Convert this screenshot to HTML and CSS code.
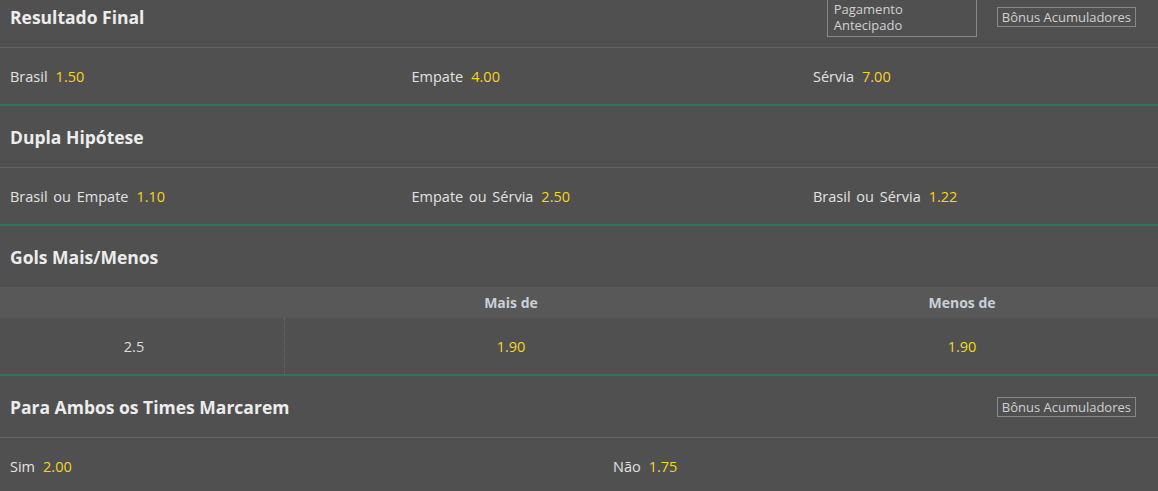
FILE: index.html
```html
<!DOCTYPE html>
<html lang="pt-BR">
<head>
<meta charset="utf-8">
<title>Mercados</title>
<link rel="stylesheet" href="styles.css">
</head>
<body>
<div class="markets">
  <section class="market">
    <div class="market-header">
      <h2 class="title">Resultado Final</h2>
      <div class="actions">
        <span class="tag tag-wide">Pagamento<br>Antecipado</span>
        <span class="tag">Bônus Acumuladores</span>
      </div>
    </div>
    <div class="odds-row three">
      <div class="pick"><span class="label">Brasil</span><span class="price">1.50</span></div>
      <div class="pick"><span class="label">Empate</span><span class="price">4.00</span></div>
      <div class="pick"><span class="label">Sérvia</span><span class="price">7.00</span></div>
    </div>
  </section>

  <section class="market">
    <div class="market-header">
      <h2 class="title">Dupla Hipótese</h2>
    </div>
    <div class="odds-row three">
      <div class="pick"><span class="label">Brasil ou Empate</span><span class="price">1.10</span></div>
      <div class="pick"><span class="label">Empate ou Sérvia</span><span class="price">2.50</span></div>
      <div class="pick"><span class="label">Brasil ou Sérvia</span><span class="price">1.22</span></div>
    </div>
  </section>

  <section class="market">
    <div class="market-header no-border">
      <h2 class="title">Gols Mais/Menos</h2>
    </div>
    <div class="table">
      <div class="thead">
        <div class="cell c0"></div>
        <div class="cell c1">Mais de</div>
        <div class="cell c2">Menos de</div>
      </div>
      <div class="trow">
        <div class="cell c0 line">2.5</div>
        <div class="cell c1 price">1.90</div>
        <div class="cell c2 price">1.90</div>
      </div>
    </div>
  </section>

  <section class="market">
    <div class="market-header">
      <h2 class="title">Para Ambos os Times Marcarem</h2>
      <div class="actions">
        <span class="tag">Bônus Acumuladores</span>
      </div>
    </div>
    <div class="odds-row two">
      <div class="pick"><span class="label">Sim</span><span class="price">2.00</span></div>
      <div class="pick"><span class="label">Não</span><span class="price">1.75</span></div>
    </div>
  </section>
</div>
</body>
</html>
```

FILE: styles.css
```css
* { box-sizing: border-box; }

html, body {
  margin: 0;
  padding: 0;
  background: #505050;
  overflow: hidden;
}

body {
  font-family: "Open Sans", "Noto Sans", sans-serif;
  color: #e4e4e4;
  font-size: 14.5px;
}

.markets {
  margin-top: -14px;
  width: 1158px;
  overflow: hidden;
}

.market {
  border-bottom: 2px solid #2f745c;
}

.market:last-child {
  border-bottom: none;
}

.market-header {
  height: 62px;
  display: flex;
  align-items: center;
  justify-content: space-between;
  padding: 0 22px 0 10px;
  border-bottom: 1px solid #646464;
}

.market-header.no-border {
  border-bottom: none;
  height: 61px;
}

.title {
  margin: 0;
  font-size: 17.5px;
  font-weight: 700;
  color: #ececec;
}

.actions {
  display: flex;
  align-items: center;
  gap: 20px;
}

.tag {
  display: inline-block;
  border: 1px solid #888;
  color: #d0d0d0;
  font-size: 13px;
  line-height: 16px;
  padding: 1px 4px 1px 4px;
  white-space: nowrap;
}

.tag-wide {
  width: 150px;
  padding: 3px 6px 3px 6px;
}

.odds-row {
  height: 56px;
  display: grid;
  align-items: center;
  padding-top: 1px;
}

.odds-row.three { grid-template-columns: repeat(3, 401.5px); }
.odds-row.two { grid-template-columns: repeat(2, 603px); }

.pick {
  padding-left: 10px;
  white-space: nowrap;
}

.label {
  color: #e2e2e2;
  word-spacing: 2px;
  margin-right: 8px;
}

.price {
  color: #f7d51c;
}

.table {
  width: 1206px;
}

.thead, .trow {
  display: grid;
  grid-template-columns: 285px 452px 450px 19px;
}

.thead {
  height: 31px;
  background: #585858;
  align-items: center;
}

.thead .cell {
  font-weight: 700;
  color: #c9d1d8;
  font-size: 14px;
  text-align: center;
}

.trow {
  height: 56px;
}

.trow .cell {
  display: flex;
  align-items: center;
  justify-content: center;
}

.trow .c0 {
  padding-right: 16px;
  border-right: 1px dotted #6a6a6a;
  color: #dcdcdc;
}
```
